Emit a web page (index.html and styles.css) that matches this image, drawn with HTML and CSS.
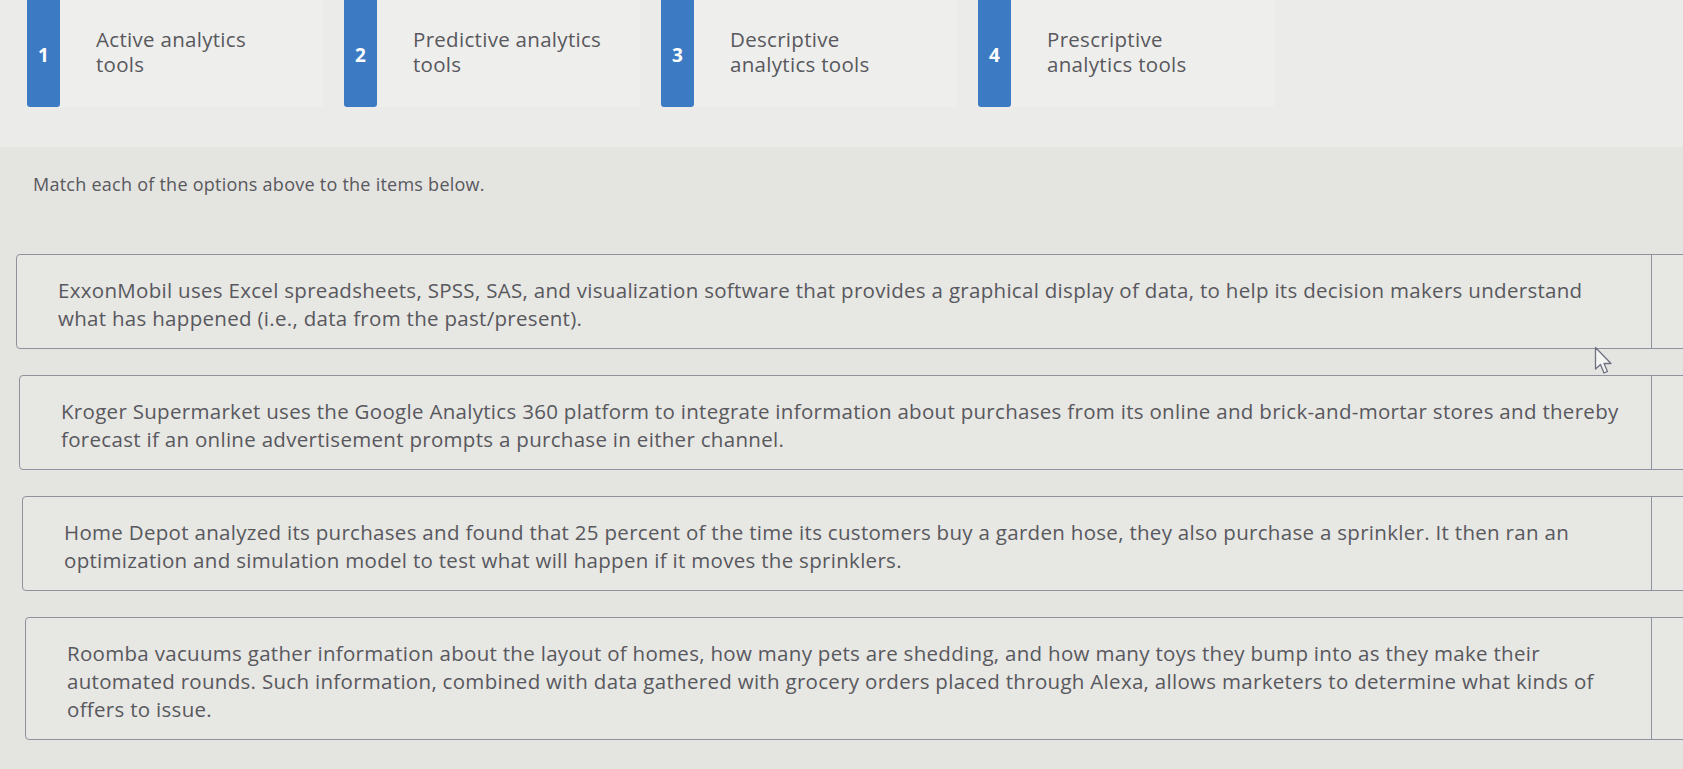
FILE: index.html
```html
<!DOCTYPE html>
<html lang="en">
<head>
<meta charset="utf-8">
<title>Matching</title>
<link rel="stylesheet" href="styles.css">
</head>
<body>
<div class="page">
  <header class="options">
    <div class="tile">
      <div class="badge">1</div>
      <div class="tile-text">Active analytics tools</div>
    </div>
    <div class="tile">
      <div class="badge">2</div>
      <div class="tile-text">Predictive analytics tools</div>
    </div>
    <div class="tile">
      <div class="badge">3</div>
      <div class="tile-text">Descriptive analytics tools</div>
    </div>
    <div class="tile">
      <div class="badge">4</div>
      <div class="tile-text">Prescriptive analytics tools</div>
    </div>
  </header>

  <p class="prompt">Match each of the options above to the items below.</p>

  <div class="cards">
    <div class="card c1">
      <div class="card-body">ExxonMobil uses Excel spreadsheets, SPSS, SAS, and visualization software that provides a graphical display of data, to help its decision makers understand<br>what has happened (i.e., data from the past/present).</div>
      <div class="card-side"></div>
    </div>
    <div class="card c2">
      <div class="card-body">Kroger Supermarket uses the Google Analytics 360 platform to integrate information about purchases from its online and brick-and-mortar stores and thereby<br>forecast if an online advertisement prompts a purchase in either channel.</div>
      <div class="card-side"></div>
    </div>
    <div class="card c3">
      <div class="card-body">Home Depot analyzed its purchases and found that 25 percent of the time its customers buy a garden hose, they also purchase a sprinkler. It then ran an<br>optimization and simulation model to test what will happen if it moves the sprinklers.</div>
      <div class="card-side"></div>
    </div>
    <div class="card c4">
      <div class="card-body">Roomba vacuums gather information about the layout of homes, how many pets are shedding, and how many toys they bump into as they make their<br>automated rounds. Such information, combined with data gathered with grocery orders placed through Alexa, allows marketers to determine what kinds of<br>offers to issue.</div>
      <div class="card-side"></div>
    </div>
  </div>

  <svg class="cursor" width="22" height="30" viewBox="0 0 22 30" aria-hidden="true">
    <path d="M1.5 1.5 L1.5 23 L6.5 18.5 L10 27 L13.5 25.5 L10 17.5 L17 17.5 Z" fill="#f4f4f2" stroke="#6e7280" stroke-width="1.3" stroke-linejoin="round"/>
  </svg>
</div>
</body>
</html>
```

FILE: styles.css
```css
html, body {
  margin: 0;
  padding: 0;
}

body {
  width: 1683px;
  height: 769px;
  overflow: hidden;
  background: #e4e4e1;
  font-family: "Open Sans", "Liberation Sans", sans-serif;
  color: #58585d;
}

.page {
  position: relative;
  height: 769px;
}

.options {
  display: flex;
  gap: 21px;
  padding: 0 0 0 27px;
  height: 147px;
  background: #ebebe9;
  box-sizing: border-box;
}

.tile {
  display: flex;
  align-items: stretch;
  width: 296px;
  height: 107px;
  background: #eeeeec;
}

.badge {
  flex: 0 0 33px;
  display: flex;
  align-items: center;
  justify-content: center;
  background: #3c7bc3;
  color: #ffffff;
  font-weight: 700;
  font-size: 19px;
  border-radius: 0 0 3px 3px;
  padding-top: 2px;
  box-sizing: border-box;
}

.tile-text {
  align-self: center;
  width: 198px;
  padding-left: 36px;
  font-size: 20.5px;
  letter-spacing: 0.3px;
  line-height: 25px;
  margin-top: -3px;
}

.prompt {
  margin: 26px 0 0 33px;
  font-size: 18px;
  letter-spacing: 0.25px;
  line-height: 22px;
}

.cards {
  display: flex;
  flex-direction: column;
  gap: 26px;
  margin-top: 59px;
}

.card {
  display: flex;
  width: 1720px;
  border: 1.5px solid #8e929e;
  border-radius: 4px;
  background: #e7e7e4;
}

.c1 { margin-left: 16px; }
.c2 { margin-left: 19px; }
.c3 { margin-left: 22px; }
.c4 { margin-left: 25px; }

.card-body {
  flex: 0 0 1634px;
  padding: 21px 0 16px 41px;
  font-size: 20.5px;
  letter-spacing: 0.3px;
  line-height: 28px;
  box-sizing: border-box;
}

.c2 .card-body { flex-basis: 1631px; }
.c3 .card-body { flex-basis: 1628px; }
.c4 .card-body { flex-basis: 1625px; }

.card-side {
  flex: 1;
  border-left: 1.5px solid #8e929e;
}

.cursor {
  position: absolute;
  left: 1594px;
  top: 346px;
}
```
